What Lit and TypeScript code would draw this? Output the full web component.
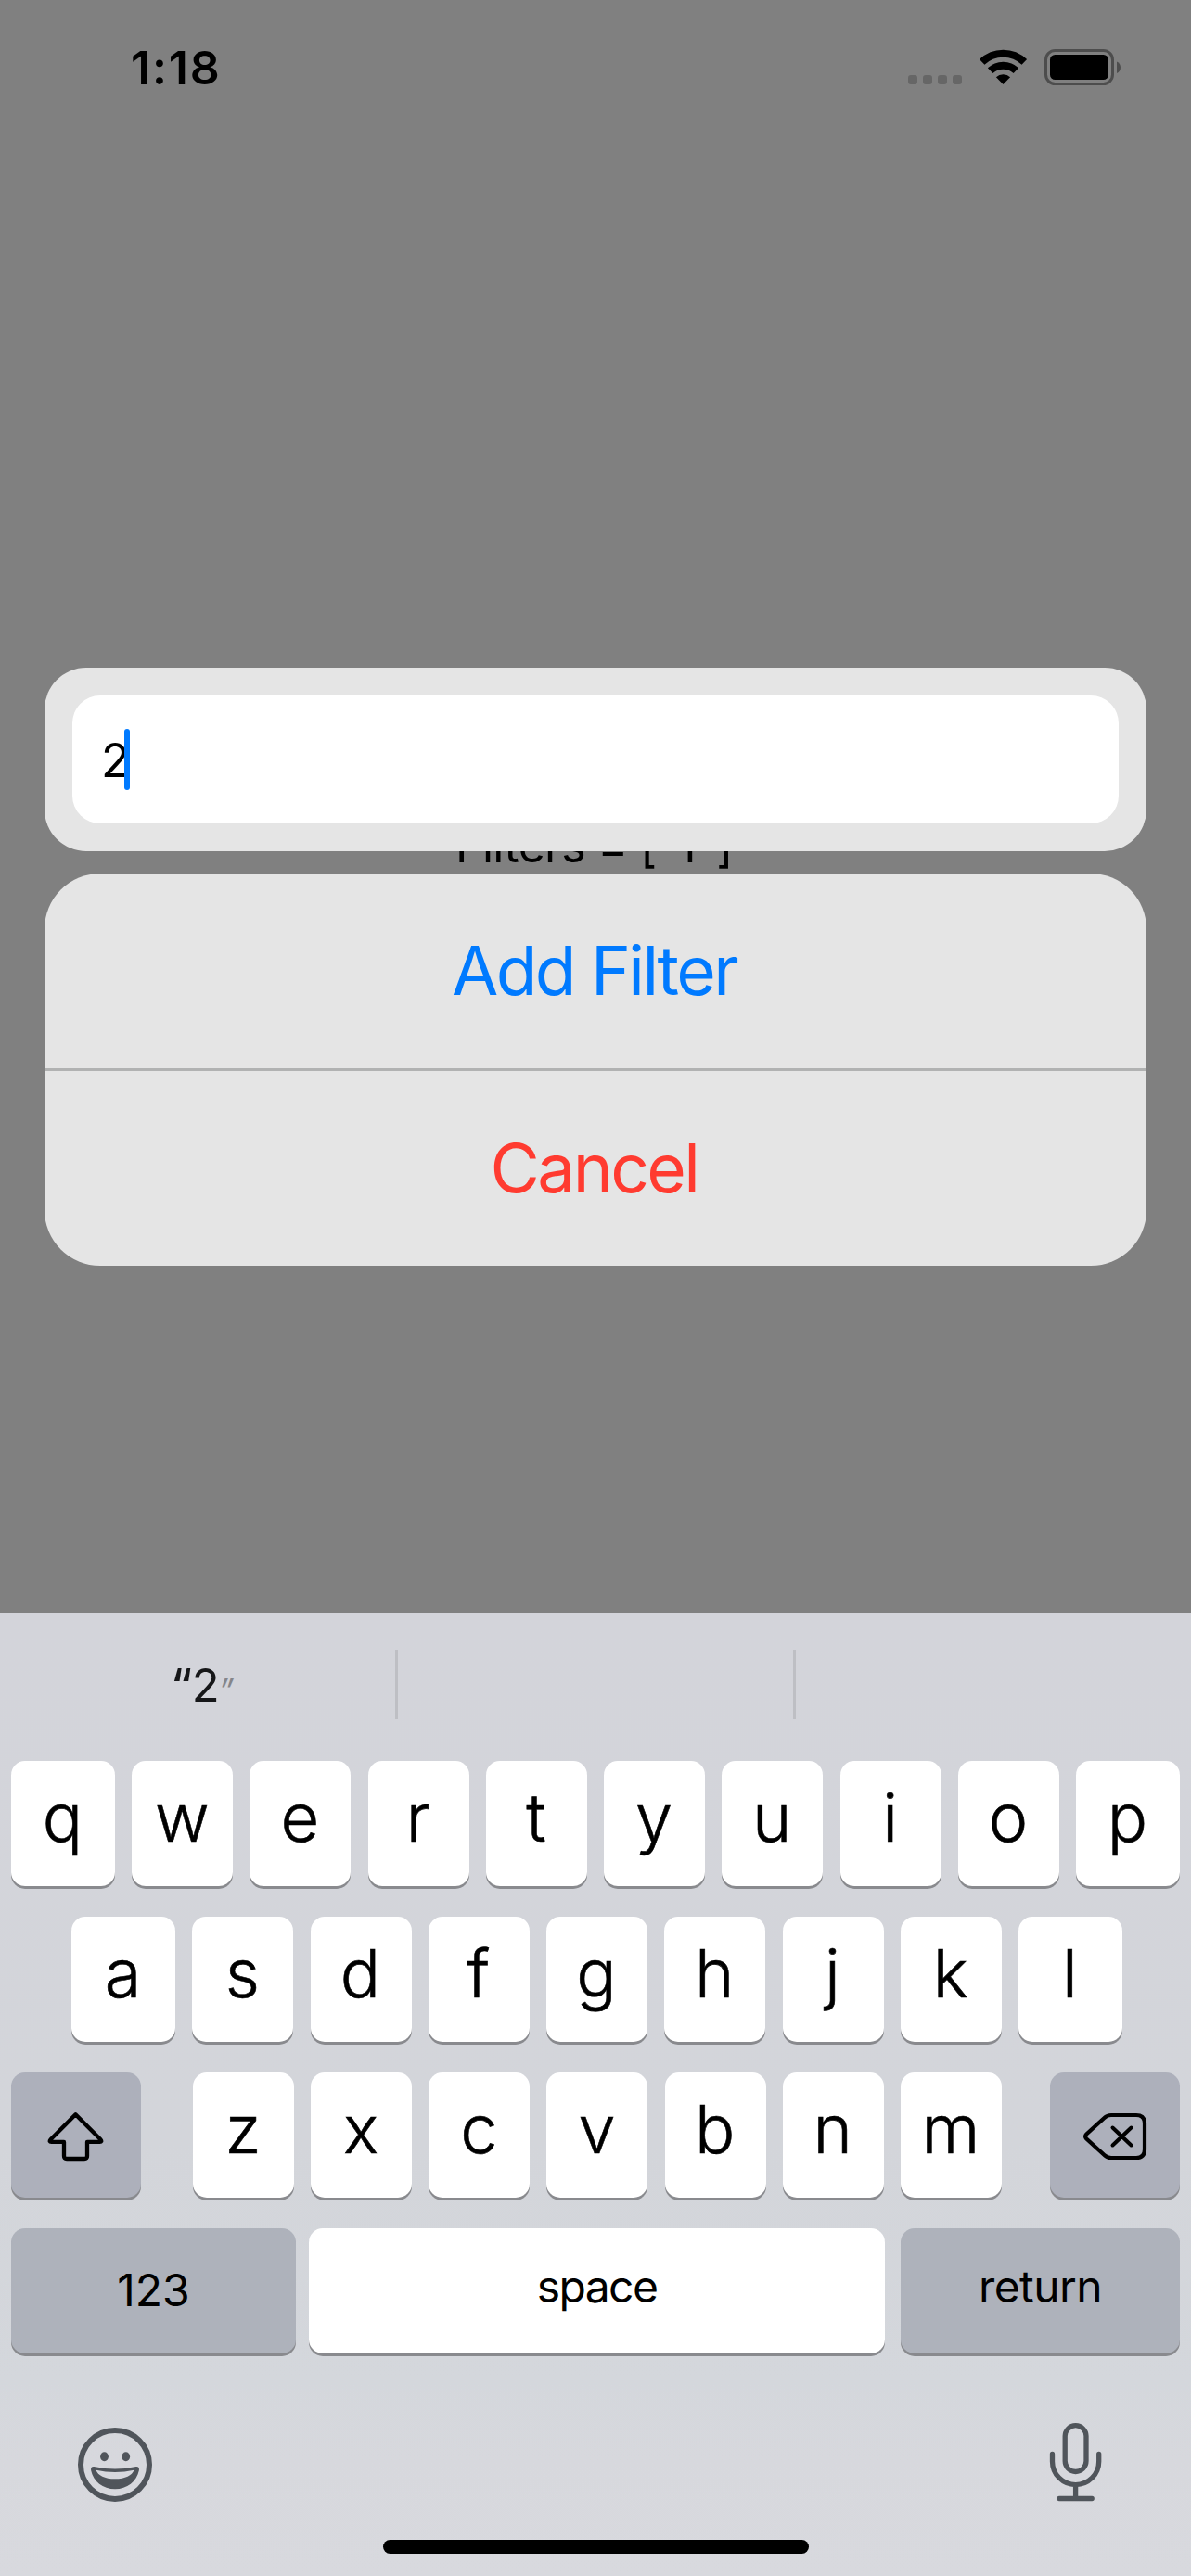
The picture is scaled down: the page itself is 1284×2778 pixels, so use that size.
import { LitElement, html, css, svg } from "lit";
import { customElement, property } from "lit/decorators.js";

@customElement("status-bar")
class StatusBar extends LitElement {
  static styles = css`
    :host {
      display: flex;
      justify-content: space-between;
      height: 141px;
      box-sizing: border-box;
      padding: 43px 76px 0 141px;
    }
    .time {
      font-size: 50px;
      font-weight: 600;
      line-height: 60px;
      letter-spacing: 1.8px;
      height: 60px;
    }
    .icons {
      display: block;
      width: 232px;
      height: 60px;
    }
  `;
  render() {
    return html`
      <div class="time">1:18</div>
      <svg class="icons" viewBox="976 43 232 60">
        ${[979, 995, 1011, 1027].map(
          (x) => svg`<rect x=${x} y="81" width="10" height="10" rx="3" fill="#666"></rect>`
        )}
        <g fill="none" stroke="#000" stroke-width="8">
          <path d="M1058.7 66.8a33 33 0 0 1 45.6 0"></path>
          <path d="M1067.6 76.2a20.2 20.2 0 0 1 27.8 0"></path>
        </g>
        <path d="M1081.5 91l-7.6-7.8a11 11 0 0 1 15.2 0z"></path>
        <rect x="1127.5" y="54.5" width="72" height="36" rx="10" fill="none" stroke="#4d4d4d" stroke-width="3"></rect>
        <rect x="1132" y="59" width="63" height="27" rx="5.5"></rect>
        <path d="M1204 66.5c5.3 2.2 5.3 10.3 0 12.5z" fill="#4d4d4d"></path>
      </svg>
    `;
  }
}

@customElement("filter-dialog")
class FilterDialog extends LitElement {
  @property() value = "";
  static styles = css`
    :host {
      display: flex;
      flex-direction: column;
      gap: 24px;
      padding: 0 48px;
    }
    .entry {
      background: #e5e5e5;
      border-radius: 45px;
      padding: 30px;
    }
    .field {
      display: flex;
      align-items: center;
      height: 138px;
      box-sizing: border-box;
      padding-left: 31px;
      background: #fff;
      border-radius: 30px;
      font-size: 50px;
      line-height: 60px;
    }
    .digit {
      width: 25px;
      padding-top: 2px;
    }
    .caret {
      position: relative;
      width: 6px;
      height: 66px;
      border-radius: 3px;
      background: #007aff;
    }
    .actions {
      background: #e5e5e5;
      border-radius: 60px;
      overflow: hidden;
    }
    .action {
      display: flex;
      align-items: center;
      justify-content: center;
      height: 210px;
      padding-right: 3px;
      font-size: 73px;
      line-height: 88px;
      letter-spacing: -2.6px;
      color: #007aff;
    }
    .cancel {
      color: #ff3b30;
      border-top: 3px solid #b1b2b2;
    }
  `;
  render() {
    return html`
      <div class="entry">
        <div class="field"><span class="digit">${this.value}</span><span class="caret"></span></div>
      </div>
      <div class="actions">
        <div class="action">Add Filter</div>
        <div class="action cancel">Cancel</div>
      </div>
    `;
  }
}

const shiftIcon = html`<svg class="icon" width="140" height="135" viewBox="12 2235 140 135">
  <path
    d="M81.5 2280.300L54.600 2307.200Q52.500 2309.900 55.500 2309.900H69V2325Q69 2328 72 2328H91Q94 2328 94 2325V2309.900H107.500Q110.500 2309.900 108.400 2307.200Z"
    fill="none" stroke="#000" stroke-width="4.300" stroke-linejoin="round"></path>
</svg>`;

const deleteIcon = html`<svg class="icon" width="140" height="135" viewBox="1132 2235 140 135">
  <path
    d="M1198 2281H1225Q1234 2281 1234 2290V2318Q1234 2327 1225 2327H1198Q1193.500 2327 1190.500 2324L1171.300 2306.500Q1169 2304 1171.300 2301.500L1190.500 2284Q1193.500 2281 1198 2281Z"
    fill="none" stroke="#000" stroke-width="4.200"></path>
  <path d="M1199.500 2294.500L1219.500 2313.500M1219.500 2294.500L1199.500 2313.500" stroke="#000" stroke-width="4" stroke-linecap="round"></path>
</svg>`;

@customElement("soft-keyboard")
class SoftKeyboard extends LitElement {
  static styles = css`
    :host {
      display: flex;
      flex-direction: column;
      height: 1038px;
      background: linear-gradient(#d3d4da 0%, #d3d5da 55%, #d4d7dc 80%, #d7d8dd 88%, #d8d9de 100%);
    }
    .suggestions {
      display: grid;
      grid-template-columns: 426px 426px 426px;
      column-gap: 3px;
      height: 159px;
    }
    .suggestion {
      display: flex;
      justify-content: center;
      align-items: flex-start;
      height: 75px;
      margin-top: 39px;
      box-sizing: border-box;
      font-size: 49px;
      line-height: 78px;
      color: #161719;
    }
    .suggestion + .suggestion {
      margin-left: -3px;
      border-left: 3px solid #bebfc4;
    }
    .word {
      padding-left: 10px;
    }
    .open {
      font-weight: 500;
      letter-spacing: -0.5px;
    }
    .close {
      font-style: italic;
      font-size: 34px;
      color: #85868a;
      margin-left: -1px;
    }
    .rows {
      display: flex;
      flex-direction: column;
      gap: 33px;
    }
    .row {
      display: flex;
      justify-content: space-between;
      padding: 0 12px;
    }
    .row.middle {
      padding: 0 74px 0 77px;
    }
    .letters {
      display: flex;
      justify-content: space-between;
      width: 872px;
    }
    .row.third {
      justify-content: flex-start;
    }
    .row.third .letters {
      margin: 0 52px 0 56px;
    }
    .key {
      display: flex;
      align-items: center;
      justify-content: center;
      width: 109px;
      height: 135px;
      box-sizing: border-box;
      padding: 0 1px 14px 0;
      border-radius: 15px;
      background: #fff;
      box-shadow: 0 3px 0 #898a8e;
      font-size: 72px;
      font-weight: 300;
      line-height: 88px;
      -webkit-text-stroke: 0.6px #000;
    }
    .key.edge {
      width: 112px;
    }
    .key.dark {
      background: #adb0bb;
    }
    .key.tool {
      width: 140px;
      padding: 0;
    }
    .key.label {
      font-size: 48px;
      font-weight: 400;
      line-height: 58px;
      padding: 0 0 10px;
      letter-spacing: -0.6px;
      -webkit-text-stroke: 0;
    }
    .key.numbers {
      width: 307px;
      padding-bottom: 2px;
      letter-spacing: 0;
      background: #aeb2bb;
    }
    .key.space {
      width: 621px;
      margin-left: 14px;
      margin-right: 17px;
      letter-spacing: -1.6px;
    }
    .key.return {
      width: 301px;
      background: #aeb2bb;
    }
    .icon {
      display: block;
    }
    .footer {
      display: flex;
      justify-content: space-between;
      padding: 72px 94px 0 81px;
    }
    .home {
      width: 459px;
      height: 15px;
      margin: 36px 0 0 413px;
      border-radius: 8px;
      background: #000;
    }
  `;

  private keys(letters: string, edges: boolean) {
    const all = [...letters];
    return all.map((letter, i) => {
      const edge = edges && (i === 0 || i === all.length - 1);
      return html`<div class=${edge ? "key edge" : "key"}>${letter}</div>`;
    });
  }

  render() {
    return html`
      <div class="suggestions">
        <div class="suggestion">
          <span class="word"><span class="open">“</span>2<span class="close">”</span></span>
        </div>
        <div class="suggestion"></div>
        <div class="suggestion"></div>
      </div>
      <div class="rows">
        <div class="row">${this.keys("qwertyuiop", true)}</div>
        <div class="row middle">${this.keys("asdfghjkl", true)}</div>
        <div class="row third">
          <div class="key tool dark">${shiftIcon}</div>
          <div class="letters">${this.keys("zxcvbnm", false)}</div>
          <div class="key tool dark">${deleteIcon}</div>
        </div>
        <div class="row">
          <div class="key label numbers">123</div>
          <div class="key label space">space</div>
          <div class="key label return">return</div>
        </div>
      </div>
      <div class="footer">
        <svg class="icon" width="86" height="93" viewBox="81 2610 86 93" fill="#50555b">
          <circle cx="124" cy="2658" r="37" fill="none" stroke="#50555b" stroke-width="6"></circle>
          <ellipse cx="112.500" cy="2649.300" rx="4.400" ry="5"></ellipse>
          <ellipse cx="135.700" cy="2649.300" rx="4.400" ry="5"></ellipse>
          <path
            fill-rule="evenodd"
            d="M101.500 2660Q124 2665 146.500 2660Q150.500 2659.500 149.900 2664C147.500 2676 137 2684.300 124 2684.300S100.500 2676 98.100 2664Q97.500 2659.500 101.500 2660ZM103.500 2663.700C105.500 2669.500 113 2673.300 124 2673.300S142.500 2669.500 144.500 2663.700Q124 2668.300 103.500 2663.700Z"
          ></path>
        </svg>
        <svg class="icon" width="62" height="93" viewBox="1128 2610 62 93" fill="none" stroke="#50555b" stroke-width="5.300" stroke-linecap="round">
          <rect x="1148.200" y="2615.700" width="22.800" height="49.800" rx="11.400"></rect>
          <path d="M1134.500 2646.500V2654.500a25.100 25.100 0 0 0 50.200 0V2646.500M1159.600 2680V2694M1142 2694.500H1177.200"></path>
        </svg>
      </div>
      <div class="home"></div>
    `;
  }
}

@customElement("app-root")
class AppRoot extends LitElement {
  static styles = css`
    :host {
      display: block;
      width: 1284px;
      height: 2778px;
      overflow: hidden;
      background: #808080;
      color: #000;
      font-family: Inter, "Liberation Sans", sans-serif;
    }
    .screen {
      display: grid;
      grid-template-rows: 141px 1599px 1038px;
    }
    .content,
    .dialog {
      grid-area: 2 / 1;
    }
    .content {
      padding: 741px 3px 0 0;
      text-align: center;
      font-size: 50px;
      line-height: 60px;
      letter-spacing: -0.7px;
      font-feature-settings: "calt" 0;
    }
    .dialog {
      position: relative;
      margin-top: 579px;
      align-self: start;
    }
  `;
  render() {
    return html`
      <div class="screen">
        <status-bar></status-bar>
        <div class="content">Filters = ["1"]</div>
        <filter-dialog class="dialog" value="2"></filter-dialog>
        <soft-keyboard></soft-keyboard>
      </div>
    `;
  }
}
